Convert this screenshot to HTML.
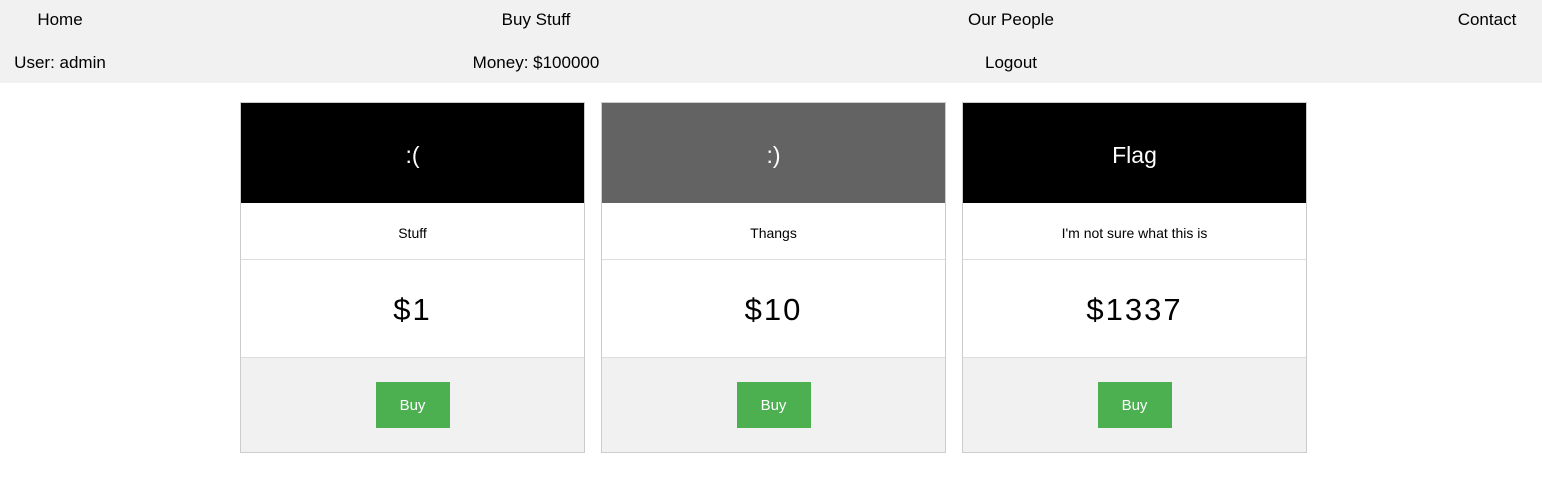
<!DOCTYPE html>
<html><head><style>
body{margin:0;width:1542px;height:481px;background:#fff;font-family:"Liberation Sans",sans-serif;color:#000;position:relative;overflow:hidden}
.nav{position:absolute;left:0;top:0;width:1542px;height:83px;background:#f1f1f1}
.n{position:absolute;font-size:17px;transform:translateX(-50%);white-space:nowrap}
.card{position:absolute;top:102px;width:343px;border:1px solid #ccc;text-align:center}
.h{height:100px;color:#fff;font-size:23px;line-height:104px}
.d{height:56px;line-height:60px;font-size:14px;border-bottom:1px solid #ddd}
.p{height:97px;line-height:99px;font-size:31px;letter-spacing:2px;border-bottom:1px solid #ddd}
.f{height:94px;background:#f1f1f1;position:relative}
.b{position:absolute;left:50%;top:24px;transform:translateX(-50%);width:74px;height:46px;line-height:48px;background:#4caf50;color:#fff;font-size:15px}
</style></head><body>
<div class="nav">
<div class="n" style="left:60px;top:10px">Home</div>
<div class="n" style="left:536px;top:10px">Buy Stuff</div>
<div class="n" style="left:1011px;top:10px">Our People</div>
<div class="n" style="left:1487px;top:10px">Contact</div>
<div class="n" style="left:60px;top:53px">User: admin</div>
<div class="n" style="left:536px;top:53px">Money: $100000</div>
<div class="n" style="left:1011px;top:53px">Logout</div>
</div>
<div class="card" style="left:240px"><div class="h" style="background:#000">:(</div><div class="d">Stuff</div><div class="p">$1</div><div class="f"><div class="b">Buy</div></div></div>
<div class="card" style="left:601px"><div class="h" style="background:#636363">:)</div><div class="d">Thangs</div><div class="p">$10</div><div class="f"><div class="b">Buy</div></div></div>
<div class="card" style="left:962px"><div class="h" style="background:#000">Flag</div><div class="d">I'm not sure what this is</div><div class="p">$1337</div><div class="f"><div class="b">Buy</div></div></div>
</body></html>
